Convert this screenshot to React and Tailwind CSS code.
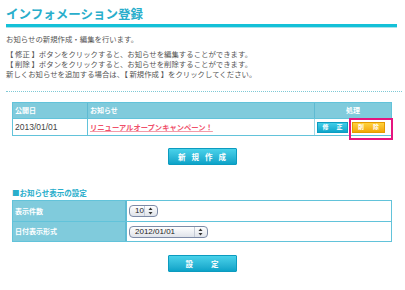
const jp = { fontFamily: '"Noto Sans CJK JP", "Noto Sans", sans-serif' };

const Arrows = () => (
  <svg width="5" height="8" viewBox="0 0 5 8" className="ml-auto">
    <path d="M2.5 0.5 L4.5 3 L0.5 3 Z" fill="#333" />
    <path d="M2.5 7.5 L4.5 5 L0.5 5 Z" fill="#333" />
  </svg>
);

const SelectBox = ({ value, width }) => (
  <div
    className={`flex items-center h-[12px] ${width} rounded-[4px] border border-[#7d8aa6] bg-gradient-to-b from-white to-[#dfe3ea] pl-[5px] pr-[4px] text-[8px] text-[#222]`}
    style={{ fontFamily: '"Liberation Sans", sans-serif' }}
  >
    <span className="leading-none">{value}</span>
    <span className="ml-auto flex items-center border-l border-[#c5cbd6] pl-[3px] h-full">
      <Arrows />
    </span>
  </div>
);

const App = () => {
  return (
    <div className="w-[405px] h-[290px] bg-white overflow-hidden" style={jp}>
      {/* Title */}
      <div className="pl-[6px] pr-[8px] pt-[6px]">
        <h1 className="text-[12.5px] leading-[16px] font-bold text-[#29aecb]">
          インフォメーション登録
        </h1>
        <div className="mt-[2px] h-[3px] bg-[#14c1d8]"></div>
        <div className="h-[1px] bg-[#a9e3ec]"></div>
      </div>

      {/* Description */}
      <div className="pl-[6px] mt-[6px] text-[7.4px] text-[#555] leading-[10px]">
        <p>お知らせの新規作成・編集を行います。</p>
        <p className="mt-[5px]">【 修正 】ボタンをクリックすると、お知らせを編集することができます。</p>
        <p>【 削除 】ボタンをクリックすると、お知らせを削除することができます。</p>
        <p>新しくお知らせを追加する場合は、【 新規作成 】をクリックしてください。</p>
      </div>

      <div className="ml-[6px] mr-[3px] mt-[12px] border-t-[1px] border-dotted border-[#7fc9d6]"></div>

      {/* Notice table */}
      <div className="ml-[12px] w-[380px] mt-[10px] border-[1.5px] border-[#62c3da]">
        <div className="flex h-[15px] bg-[#80cbdc] text-white text-[7px] font-bold items-center">
          <div className="w-[75px] pl-[2px] h-full flex items-center border-r border-[#5fbad2]">公開日</div>
          <div className="w-[227px] pl-[2px] h-full flex items-center border-r border-[#5fbad2]">お知らせ</div>
          <div className="flex-1 text-center">処理</div>
        </div>
        <div className="flex h-[17px] items-center border-t border-[#62c3da]">
          <div
            className="w-[75px] pl-[2px] h-full flex items-center border-r-[1.5px] border-[#62c3da] text-[8.5px] text-[#444]"
            style={{ fontFamily: '"Liberation Sans", sans-serif' }}
          >
            2013/01/01
          </div>
          <div className="w-[227px] pl-[2px] h-full flex items-center border-r border-[#9fd8e5]">
            <span className="text-[7.3px] font-bold text-[#f0506a] underline decoration-[#f59aa8] underline-offset-[1px]">
              リニューアルオープンキャンペーン！
            </span>
          </div>
          <div className="flex-1 flex items-center pl-[2px] gap-[4px] relative">
            <button className="w-[31px] h-[11px] bg-gradient-to-b from-[#3fcde8] to-[#0aa6cb] border border-[#0d9cc0] text-white text-[6px] font-bold leading-none flex items-center justify-center gap-[8px]">
              <span>修</span><span>正</span>
            </button>
            <button className="w-[33px] h-[11px] bg-gradient-to-b from-[#ffd23a] to-[#f2a700] border border-[#e49a00] text-white text-[6px] font-bold leading-none flex items-center justify-center gap-[9px]">
              <span>削</span><span>除</span>
            </button>
            <div className="absolute left-[34px] top-[-4px] w-[44px] h-[22px] border-[2.5px] border-[#e5157f] pointer-events-none"></div>
          </div>
        </div>
      </div>

      <div className="flex justify-center mt-[12px] pr-[1px]">
        <button className="w-[69px] h-[17px] bg-gradient-to-b from-[#48d2ea] to-[#0aa3c8] border border-[#0c9bbf] rounded-[1px] text-white text-[7.5px] font-bold leading-none flex items-center justify-center gap-[6px]">
          <span>新</span><span>規</span><span>作</span><span>成</span>
        </button>
      </div>

      {/* Display settings */}
      <div className="pl-[12px] mt-[23px] text-[7.5px] font-bold text-[#29aecb] leading-[10px]">
        ■お知らせ表示の設定
      </div>

      <div className="ml-[12px] w-[380px] mt-[2px] border-[1.5px] border-[#62c3da]">
        <div className="flex h-[20px]">
          <div className="w-[114px] bg-[#80cbdc] border-r-[2px] border-[#5fbad2] text-white text-[7px] font-bold flex items-center pl-[2px]">
            表示件数
          </div>
          <div className="flex-1 flex items-center pl-[2px]">
            <SelectBox value="10" width="w-[29px]" />
          </div>
        </div>
        <div className="flex h-[20px] border-t-[1.5px] border-[#62c3da]">
          <div className="w-[114px] bg-[#80cbdc] border-r-[2px] border-[#5fbad2] text-white text-[7px] font-bold flex items-center pl-[2px]">
            日付表示形式
          </div>
          <div className="flex-1 flex items-center pl-[2px]">
            <SelectBox value="2012/01/01" width="w-[79px]" />
          </div>
        </div>
      </div>

      <div className="flex justify-center mt-[13px] pr-[1px]">
        <button className="w-[69px] h-[17px] bg-gradient-to-b from-[#48d2ea] to-[#0aa3c8] border border-[#0c9bbf] rounded-[1px] text-white text-[7.5px] font-bold leading-none flex items-center justify-center gap-[18px]">
          <span>設</span><span>定</span>
        </button>
      </div>
    </div>
  );
};

export default App;
